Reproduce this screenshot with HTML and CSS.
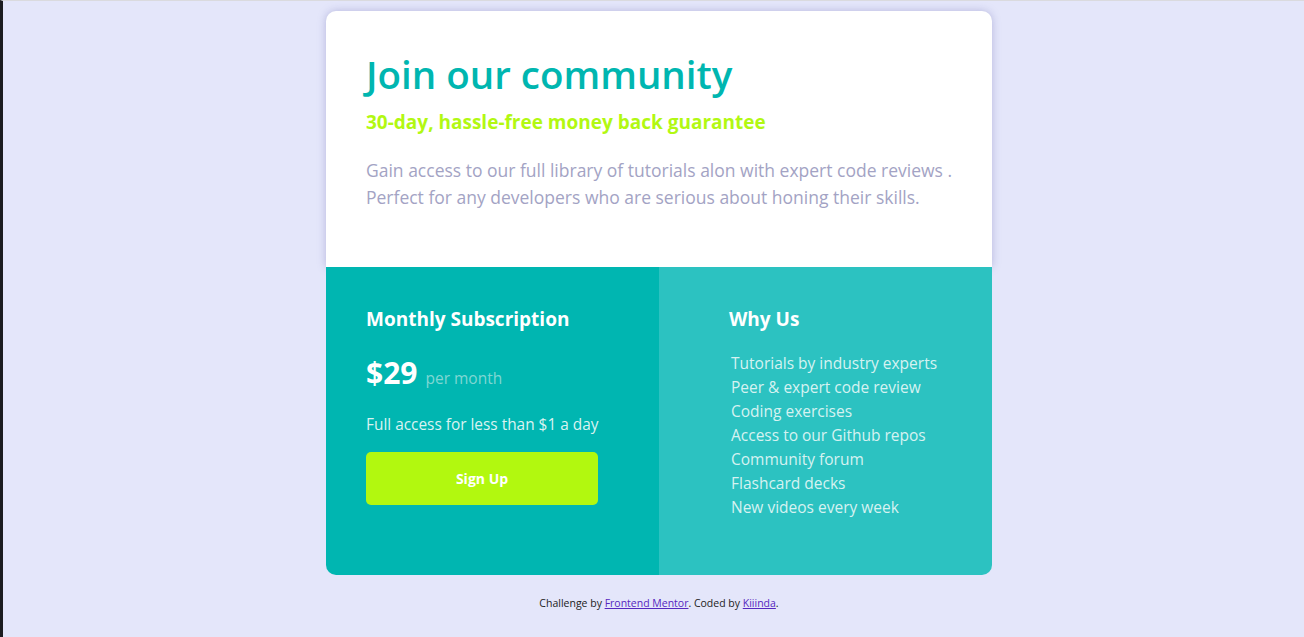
FILE: index.html
```html
<!DOCTYPE html>
<html lang="en">
<head>
<meta charset="utf-8">
<title>Single price grid component</title>
<link rel="stylesheet" href="styles.css">
</head>
<body>
<main class="page">
  <section class="card">
    <div class="intro">
      <h1 class="title">Join our community</h1>
      <h2 class="subtitle">30-day, hassle-free money back guarantee</h2>
      <p class="desc">Gain access to our full library of tutorials alon with expert code reviews .<br>Perfect for any developers who are serious about honing their skills.</p>
    </div>
    <div class="bottom">
      <div class="sub">
        <h3 class="sub-title">Monthly Subscription</h3>
        <p class="price"><span class="amount">$29</span><span class="per">per month</span></p>
        <p class="access">Full access for less than $1 a day</p>
        <button class="signup">Sign Up</button>
      </div>
      <div class="why">
        <h3 class="why-title">Why Us</h3>
        <ul class="why-list">
          <li>Tutorials by industry experts</li>
          <li>Peer &amp; expert code review</li>
          <li>Coding exercises</li>
          <li>Access to our Github repos</li>
          <li>Community forum</li>
          <li>Flashcard decks</li>
          <li>New videos every week</li>
        </ul>
      </div>
    </div>
  </section>
  <footer class="attribution">
    Challenge by <a href="#">Frontend Mentor</a>. Coded by <a href="#">Kiiinda</a>.
  </footer>
</main>
</body>
</html>
```

FILE: styles.css
```css
html {
  border-left: 3px solid #1c1c20;
  border-top: 1px solid #dadade;
  background: #e4e6fa;
  height: 100%;
  box-sizing: border-box;
}
body {
  margin: 0;
  padding-left: 11px;
  font-family: "Open Sans", "Noto Sans", sans-serif;
  background: #e4e6fa;
}
.page {
  display: flex;
  flex-direction: column;
  align-items: center;
  padding-top: 10px;
}
.card {
  width: 666px;
  border-radius: 10px;
}
.intro {
  background: #fff;
  border-radius: 10px 10px 0 0;
  box-shadow: 0 0 8px rgba(110, 110, 180, 0.4);
  padding: 38px 20px 0 40px;
  height: 256px;
  box-sizing: border-box;
}
.title {
  margin: 0;
  font-size: 38.5px;
  font-weight: 600;
  color: #00b6b0;
  line-height: 50px;
}
.subtitle {
  margin: 9px 0 0 0;
  font-size: 19px;
  font-weight: 700;
  color: #b2f812;
  line-height: 28px;
}
.desc {
  margin: 21px 0 0 0;
  font-size: 17.5px;
  line-height: 27px;
  color: #a3a3c4;
}
.bottom {
  display: grid;
  grid-template-columns: 333px 333px;
  height: 308px;
}
.sub {
  background: #00b6b1;
  border-radius: 0 0 0 10px;
  padding: 40px 40px 0 40px;
  color: #fff;
}
.why {
  background: #2cc2c1;
  border-radius: 0 0 10px 0;
  padding: 40px 30px 0 70px;
  color: #fff;
}
.sub-title, .why-title {
  margin: 0;
  font-size: 19px;
  font-weight: 700;
  line-height: 24px;
}
.price {
  margin: 24px 0 0 0;
  display: flex;
  align-items: baseline;
  gap: 8px;
}
.amount {
  font-size: 30px;
  font-weight: 700;
  line-height: 36px;
}
.per {
  font-size: 15.5px;
  color: #7fd6d3;
}
.access {
  margin: 23px 0 0 0;
  font-size: 15.4px;
  line-height: 22px;
  color: #daf3f1;
}
.signup {
  margin-top: 16px;
  width: 232px;
  height: 53px;
  border: none;
  border-radius: 5px;
  background: #b2f80f;
  color: #fff;
  font-family: inherit;
  font-size: 14px;
  font-weight: 700;
}
.why-list {
  list-style: none;
  margin: 20px 0 0 2px;
  padding: 0;
  font-size: 15.5px;
  line-height: 24px;
  color: #d6f2f1;
}
.attribution {
  margin-top: 20px;
  font-size: 10.5px;
  color: #222;
  line-height: 16px;
}
.attribution a {
  color: #5627bf;
}
```
